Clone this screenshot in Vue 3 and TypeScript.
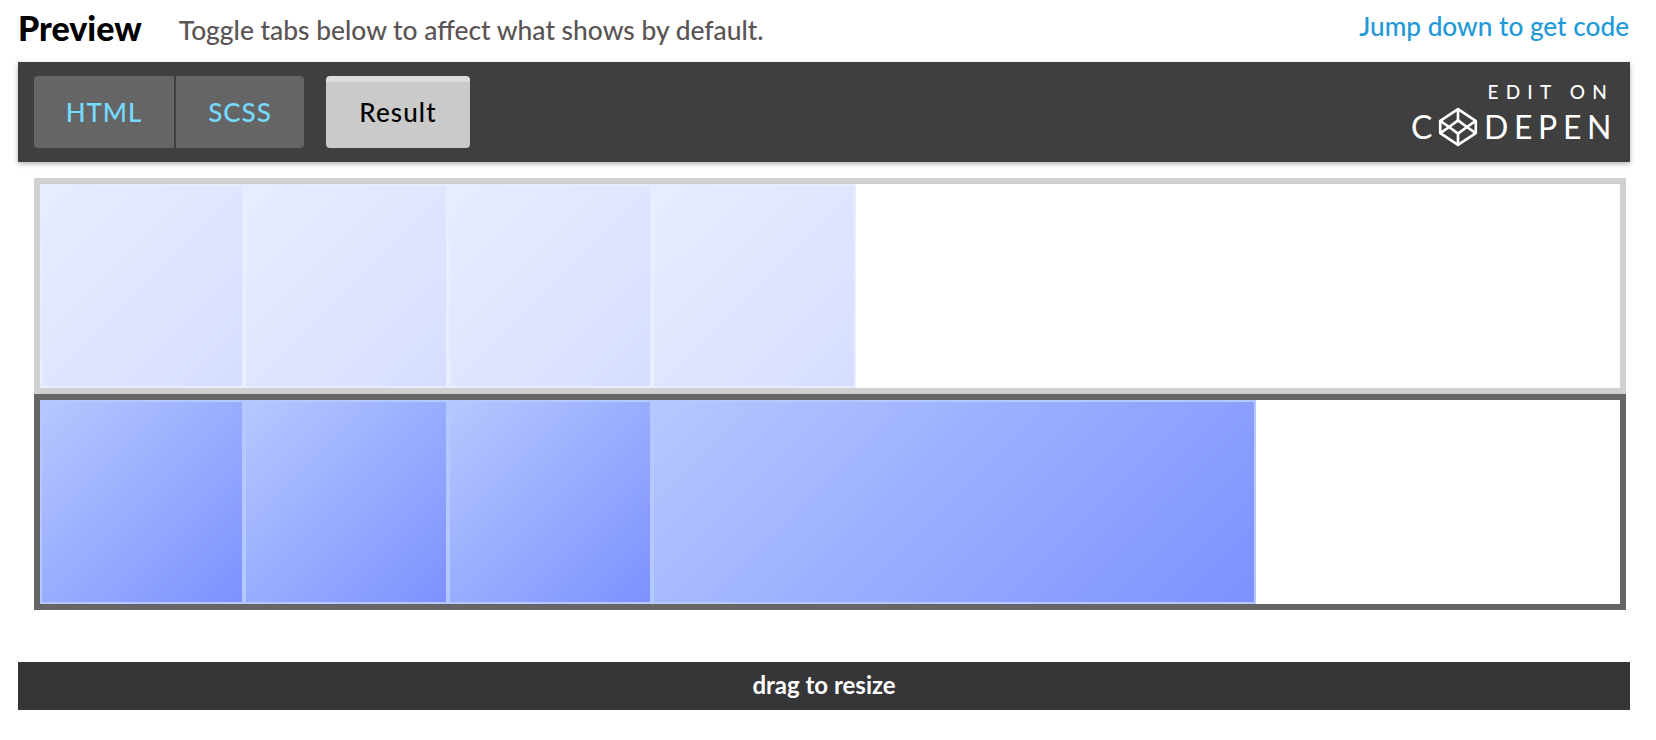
<template>
  <div class="page">
    <div class="top-row">
      <h2 class="title">Preview</h2>
      <p class="hint">Toggle tabs below to affect what shows by default.</p>
      <a class="jump" href="#code">Jump down to get code</a>
    </div>

    <div class="embed-bar">
      <div class="tabs">
        <span v-for="tab in codeTabs" :key="tab" class="tab">{{ tab }}</span>
      </div>
      <span class="result">Result</span>
      <div class="edit-on">
        <span class="edit-label">EDIT ON</span>
        <span class="logo">
          <span>C</span>
          <svg class="logo-icon" viewBox="0 0 36 36" aria-hidden="true">
            <path d="M18 2 34 12.500V23.500L18 34 2 23.500V12.500Z" />
            <path d="M18 12 26 18 18 24 10 18Z" />
            <path d="M18 2V12M18 24V34M2 12.500 10 18M34 12.500 26 18M2 23.500 10 18M34 23.500 26 18" />
          </svg>
          <span>DEPEN</span>
        </span>
      </div>
    </div>

    <div class="stage">
      <div v-for="row in rows" :key="row.name" class="box" :class="row.name">
        <div
          v-for="(wide, i) in row.items"
          :key="i"
          class="item"
          :class="{ wide }"
        ></div>
      </div>
    </div>

    <div class="resize-bar">drag to resize</div>
  </div>
</template>

<script setup lang="ts">
const codeTabs = ['HTML', 'SCSS']

const rows = [
  { name: 'faded', items: [false, false, false, false] },
  { name: 'strong', items: [false, false, false, true] },
]
</script>

<style scoped>
.page {
  box-sizing: border-box;
  width: 1656px;
  height: 740px;
  padding: 0 26px 0 18px;
  background: #fff;
  font-family: Lato, "Open Sans", sans-serif;
  overflow: hidden;
}

.top-row {
  display: flex;
  align-items: center;
  height: 62px;
}

.title {
  margin: 0 0 8px;
  font-size: 34px;
  font-weight: 900;
  color: #000;
}

.hint {
  margin: 0 0 3px 37px;
  font-size: 26.4px;
  font-weight: 500;
  color: #5a5454;
}

.jump {
  margin: 0 1px 10px auto;
  font-size: 26.2px;
  font-weight: 500;
  color: #2199d8;
  text-decoration: none;
}

.embed-bar {
  display: flex;
  align-items: center;
  height: 100px;
  padding: 0 13px 0 16px;
  background: #3f3f3f;
  box-shadow: 0 2px 5px rgba(0, 0, 0, 0.3);
}

.tabs {
  display: flex;
  gap: 2px;
  height: 72px;
  border-radius: 4px;
  overflow: hidden;
}

.tab {
  display: flex;
  align-items: center;
  justify-content: center;
  width: 140px;
  background: #656565;
  color: #76daff;
  font-size: 26px;
  font-weight: 500;
  letter-spacing: 0.9px;
}

.tab + .tab {
  width: 128px;
}

.result {
  display: flex;
  align-items: center;
  justify-content: center;
  box-sizing: border-box;
  width: 144px;
  height: 72px;
  margin-left: 22px;
  padding-bottom: 6px;
  border-top: 6px solid #dcdcdc;
  border-radius: 4px;
  background: #cacaca;
  color: #000;
  font-size: 26px;
  font-weight: 500;
  letter-spacing: 1.1px;
}

.edit-on {
  display: flex;
  flex-direction: column;
  align-items: flex-end;
  margin-left: auto;
  padding-top: 3px;
  color: #fff;
}

.edit-label {
  margin-right: 3px;
  font-size: 19px;
  font-weight: 500;
  line-height: 22px;
  letter-spacing: 7.2px;
}

.logo {
  display: flex;
  align-items: center;
  margin-top: 5px;
  font-size: 32px;
  font-weight: 400;
  line-height: 38px;
  letter-spacing: 5.6px;
}

.logo-icon {
  width: 40px;
  height: 40px;
  margin: -1px 6px -1px 0;
  fill: none;
  stroke: #fff;
  stroke-width: 2.4;
  stroke-linejoin: round;
}

.stage {
  display: flex;
  flex-direction: column;
  padding: 16px 4px 0 16px;
}

.box {
  display: flex;
  box-sizing: border-box;
  height: 216px;
  border: 6px solid #d0d0d0;
}

.box.strong {
  border-color: #666;
}

.item {
  box-sizing: border-box;
  width: 204px;
  border: 2px solid #b5c8ff;
  background: linear-gradient(135deg, #b5c8ff, #7d91ff);
}

.item.wide {
  width: 604px;
}

.faded .item {
  opacity: 0.3;
}

.resize-bar {
  display: flex;
  align-items: center;
  justify-content: center;
  height: 48px;
  margin-top: 52px;
  padding-bottom: 3px;
  box-sizing: border-box;
  background: #363638;
  color: #fff;
  font-size: 24px;
  font-weight: 700;
}
</style>
